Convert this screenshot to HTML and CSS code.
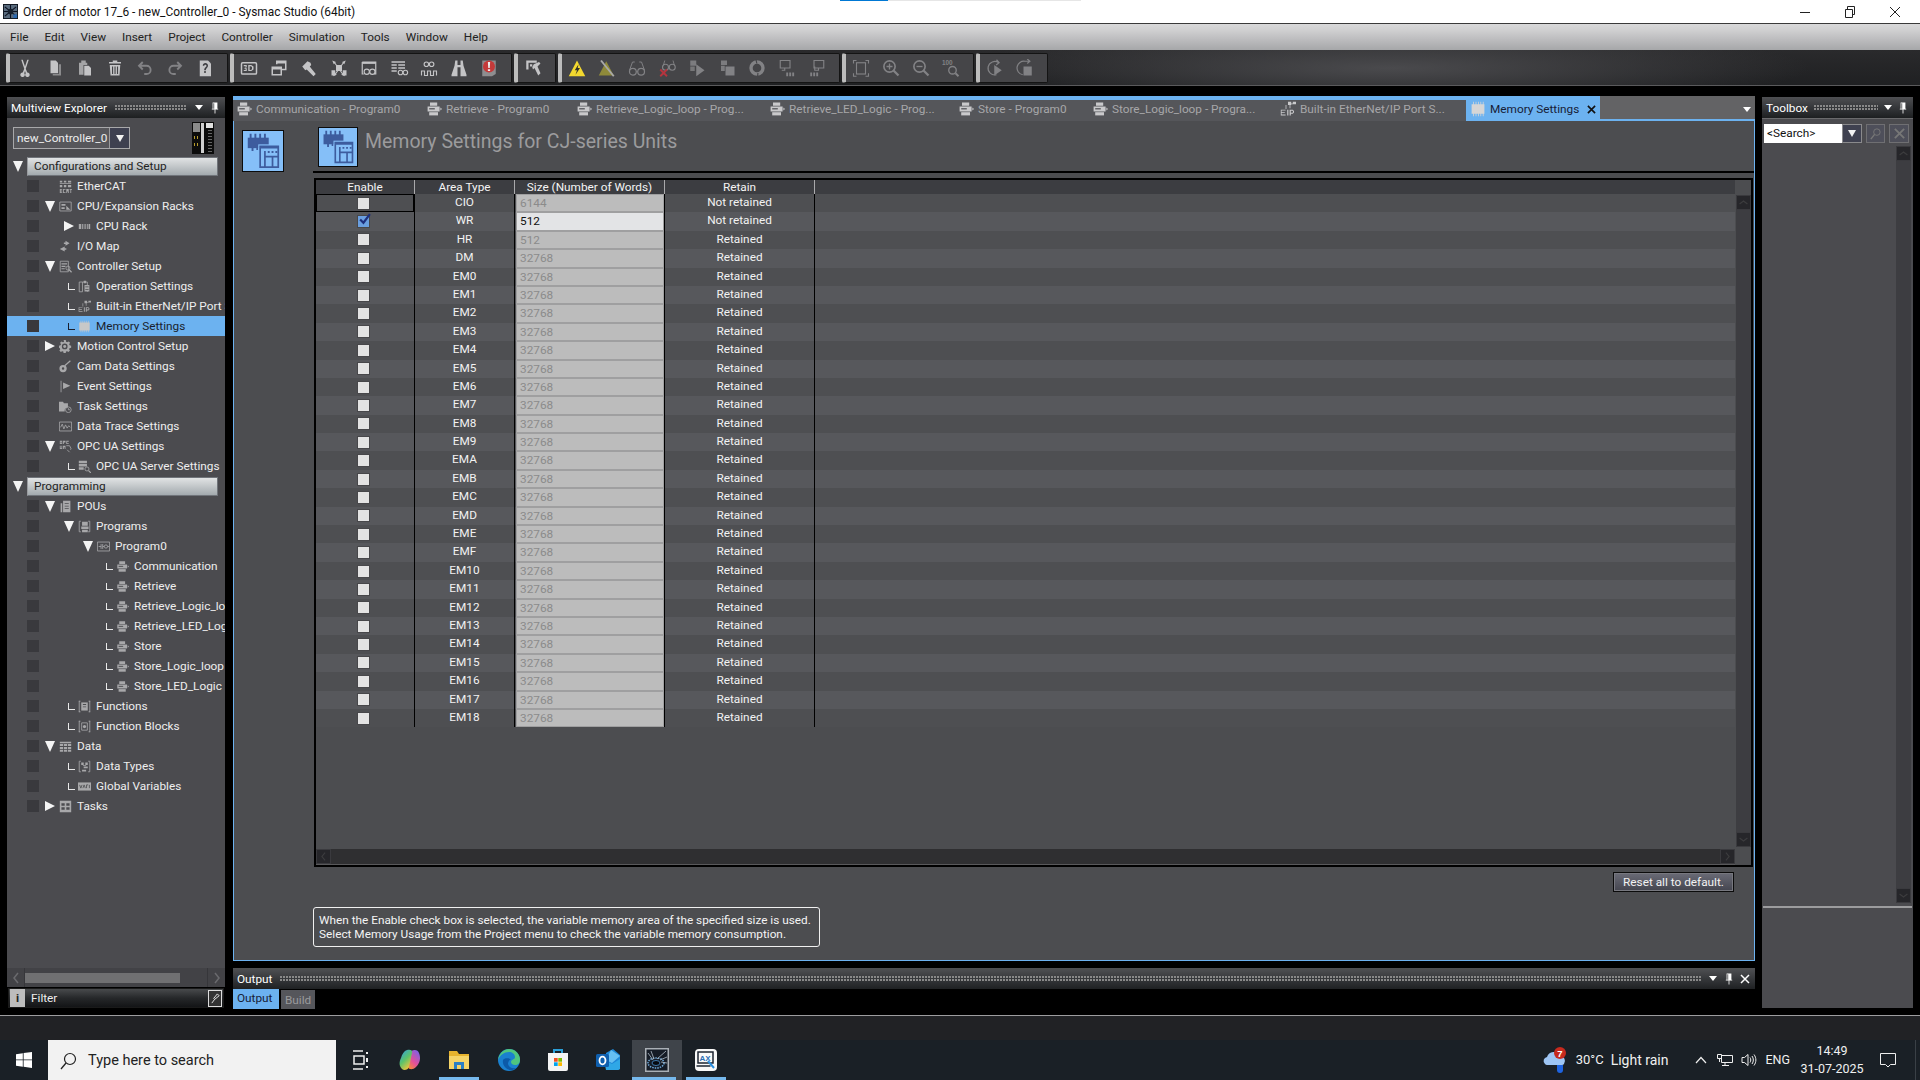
FILE: index.html
```html
<!DOCTYPE html>
<html lang="en">
<head>
<meta charset="utf-8">
<title>Order of motor 17_6 - new_Controller_0 - Sysmac Studio (64bit)</title>
<link rel="stylesheet" href="styles.css">
</head>
<body>
<svg class="defs" aria-hidden="true">
  <symbol id="cut" viewBox="0 0 24 24"><path d="M7 1h2l3 9 3-9h2l-4 12 2 5a3 3 0 1 1-2 1l-1-3-1 3a3 3 0 1 1-2-1l2-5z"/></symbol>
  <symbol id="copy" viewBox="0 0 24 24"><path d="M6 2h7l3 3v14H6z"/><path opacity=".55" d="M17 7h3v15H9v-2h8z"/></symbol>
  <symbol id="paste" viewBox="0 0 24 24"><path opacity=".75" d="M4 5h3V2h6v3h2v3h-5v13H4z"/><path d="M11 9h6l3 3v10h-9z"/></symbol>
  <symbol id="trash" viewBox="0 0 24 24"><path d="M9 2h6v2h5v2H4V4h5z"/><path d="M5 8h14l-1 14H6zM8 10v10h1.500V10zm3.300 0v10h1.500V10zm3.300 0v10h1.500V10z" fill-rule="evenodd"/></symbol>
  <symbol id="undo" viewBox="0 0 24 24"><path fill="none" stroke="currentColor" stroke-width="2.500" d="M9 4L4 9l5 5M4 9h10a5.500 5.500 0 0 1 0 11h-3"/></symbol>
  <symbol id="redo" viewBox="0 0 24 24"><path fill="none" stroke="currentColor" stroke-width="2.500" d="M15 4l5 5-5 5M20 9H10a5.500 5.500 0 0 0 0 11h3"/></symbol>
  <symbol id="help" viewBox="0 0 24 24"><path d="M5 2h11l4 4v17H5z"/><path fill="#3c3c40" d="M9 9c0-5 7-5 7 0 0 3-3 3-3 6h-2c0-4 3-4 3-6 0-2-3-2-3 0zM11 16h2v2.500h-2z"/></symbol>
  <symbol id="t3d" viewBox="0 0 24 24"><rect x="2" y="5" width="20" height="15" rx="1.500" fill="none" stroke="currentColor" stroke-width="2"/><path d="M5 8h4v2.500l-1 1 1 1V16H5v-1.500h2.500v-1.600H6v-1.300h1.500V9.500H5zM11 8h4l3 2v4l-3 2h-4zm1.800 1.500v5h1.700l1.500-1v-3l-1.500-1z"/></symbol>
  <symbol id="wins" viewBox="0 0 24 24"><path fill="none" stroke="currentColor" stroke-width="2" d="M3 11h12v10H3zM9 7V3h12v11h-6"/><path d="M3 11h12v3H3zM9 3h12v3H9z"/></symbol>
  <symbol id="hammer" viewBox="0 0 24 24"><path d="M3 10l7-7 4 2 1 3-2 2 8 10-3 3-9-9-2 1z"/></symbol>
  <symbol id="xchip" viewBox="0 0 24 24"><path d="M3 2l5 2-1 1 10 14 1-1 2 5-5-2 1-1L6 6 5 7zM21 2l-5 2 1 1L7 19l-1-1-2 5 5-2-1-1L18 6l1 1z"/><rect x="8" y="8" width="8" height="8"/><path d="M2 15h5v7H2zM17 15h5v7h-5z"/></symbol>
  <symbol id="winglass" viewBox="0 0 24 24"><path fill="none" stroke="currentColor" stroke-width="1.600" d="M3 4h18v16h-2M5 20H3V4"/><path d="M3 4h18v2.500H3z"/><circle cx="9" cy="17" r="3.500" fill="none" stroke="currentColor" stroke-width="1.500"/><circle cx="16.500" cy="17" r="3.500" fill="none" stroke="currentColor" stroke-width="1.500"/></symbol>
  <symbol id="tblglass" viewBox="0 0 24 24"><path d="M2 3h18v2H2zM2 7h7v2H2zM11 7h9v2h-9zM2 11h7v2H2zM11 11h9v2h-9zM2 15h7v2H2z"/><circle cx="14" cy="18" r="3" fill="none" stroke="currentColor" stroke-width="1.500"/><circle cx="20.500" cy="18" r="3" fill="none" stroke="currentColor" stroke-width="1.500"/></symbol>
  <symbol id="gpulse" viewBox="0 0 24 24"><circle cx="8.500" cy="7" r="3" fill="none" stroke="currentColor" stroke-width="1.500"/><circle cx="15.500" cy="7" r="3" fill="none" stroke="currentColor" stroke-width="1.500"/><path fill="none" stroke="currentColor" stroke-width="1.500" d="M2 22v-6h4v6h4v-6h4v6h4v-6h4v6"/></symbol>
  <symbol id="binoc" viewBox="0 0 24 24"><path d="M7 2h3v6h4V2h3l1 7 4 12v2h-8V11h-4v12H2v-2L6 9z"/></symbol>
  <symbol id="alert" viewBox="0 0 24 24"><path fill="#8e8e90" d="M3 2h18v18l-5 3H3z"/><circle cx="12" cy="10" r="8" fill="#c43a3a"/><path fill="#eee" d="M10.500 4h3l-.5 8h-2zM10.500 13.500h3v2.500h-3z"/></symbol>
  <symbol id="build" viewBox="0 0 24 24"><path d="M3 2h14v3H6v9H3z"/><path d="M8 7h3v3H8zM13 7l7-3 2 2-4 4 4 9-3 3-5-10-2 2-1-3z"/></symbol>
  <symbol id="warn" viewBox="0 0 24 24"><path fill="#f3d82f" d="M12 2l11 21H1z"/><path fill="#33332a" d="M14 7l-5 8h3l-2 6 6-9h-3z"/></symbol>
  <symbol id="warnoff" viewBox="0 0 24 24"><path fill="#8f8a3a" d="M11 3l10 19H1z"/><path stroke="#a9a9a9" stroke-width="2.500" d="M4 2l17 21"/></symbol>
  <symbol id="glass" viewBox="0 0 24 24"><circle cx="6.500" cy="17" r="4.500" fill="none" stroke="currentColor" stroke-width="1.600"/><circle cx="17.500" cy="17" r="4.500" fill="none" stroke="currentColor" stroke-width="1.600"/><path fill="none" stroke="currentColor" stroke-width="1.300" d="M2 15L6 4h3M22 15L18 4h-3M11 17h2"/></symbol>
  <symbol id="glassx" viewBox="0 0 24 24"><circle cx="10" cy="11" r="4" fill="none" stroke="currentColor" stroke-width="1.500"/><circle cx="19" cy="11" r="4" fill="none" stroke="currentColor" stroke-width="1.500"/><path fill="none" stroke="currentColor" stroke-width="1.200" d="M7 9l2-7M22 9l-2-7"/><path stroke="#b5343e" stroke-width="2.500" d="M3 14l9 9M12 14l-9 9"/></symbol>
  <symbol id="pplay" viewBox="0 0 24 24"><path d="M3 2h8v7H3z" opacity=".9"/><path d="M3 10h6v6H3z" opacity=".8"/><path d="M11 7l11 8-11 8z"/></symbol>
  <symbol id="pstop" viewBox="0 0 24 24"><path d="M4 2h8v6H4zM4 9h5v7H4z" opacity=".9"/><rect x="10" y="10" width="12" height="12"/></symbol>
  <symbol id="ring" viewBox="0 0 24 24"><circle cx="12" cy="12" r="8" fill="none" stroke="currentColor" stroke-width="4.500"/><path fill="#454548" d="M10 1h1.500l1 5H11zM12.500 18.500h1.500l-.5 5H12z"/></symbol>
  <symbol id="mona" viewBox="0 0 24 24"><path fill="none" stroke="currentColor" stroke-width="1.500" d="M3 2h13v10H3zM9 12v3H5"/><path d="M11 18h2.500v5H11zM15 18h2.500v5H15zM19 18h2.500v5H19z"/></symbol>
  <symbol id="monb" viewBox="0 0 24 24"><path fill="none" stroke="currentColor" stroke-width="1.500" d="M8 2h13v10H8zM14 12v3h-5V10"/><path d="M3 18h2.500v5H3zM7 18h2.500v5H7zM11 18h2.500v5H11z"/></symbol>
  <symbol id="frame" viewBox="0 0 24 24"><path fill="none" stroke="currentColor" stroke-width="1.500" d="M6 2H2v4M18 2h4v4M6 23H2v-4M18 23h4v-4"/><rect x="6" y="5" width="12" height="15" fill="none" stroke="currentColor" stroke-width="1.500"/></symbol>
  <symbol id="zin" viewBox="0 0 24 24"><circle cx="10" cy="10" r="7.500" fill="none" stroke="currentColor" stroke-width="2.200"/><path stroke="currentColor" stroke-width="3" d="M15 15l7 7"/><path stroke="currentColor" stroke-width="1.800" d="M6 10h8M10 6v8"/></symbol>
  <symbol id="zout" viewBox="0 0 24 24"><circle cx="10" cy="10" r="7.500" fill="none" stroke="currentColor" stroke-width="2.200"/><path stroke="currentColor" stroke-width="3" d="M15 15l7 7"/><path stroke="currentColor" stroke-width="1.800" d="M6 10h8"/></symbol>
  <symbol id="z100" viewBox="0 0 24 24"><text x="0" y="8" font-size="8.500" font-family="Liberation Sans" font-weight="700" fill="currentColor">100</text><circle cx="14" cy="15" r="5" fill="none" stroke="currentColor" stroke-width="1.800"/><path stroke="currentColor" stroke-width="2.500" d="M18 19l4 4"/></symbol>
  <symbol id="cplay" viewBox="0 0 24 24"><path fill="none" stroke="currentColor" stroke-width="1.600" d="M14 21a9 9 0 1 1 3-16M14 1l3.500 4-4 3"/><path d="M11 8l10 7-10 7z"/></symbol>
  <symbol id="cstop" viewBox="0 0 24 24"><path fill="none" stroke="currentColor" stroke-width="1.600" d="M9 21a9 9 0 0 1 3-18h6M15 0l3.500 3-3.500 3"/><rect x="10" y="10" width="11" height="12"/></symbol>

  <symbol id="prog" viewBox="0 0 20 20"><path d="M5 2h9v4H5zM2 7h15v6H2z"/><path d="M4 14h11v4H4z"/><path fill="#4c4d50" d="M4 9h7v1.500H4z"/><path d="M18 8l2 2-2 2z"/></symbol>
  <symbol id="mem" viewBox="0 0 20 20"><path d="M2 4h2V1h1v3h2V1h1v3h2V1h1v3h2V1h1v3h2V1h1v3h1v12h-1v3h-1v-3h-2v3h-1v-3h-2v3h-1v-3H8v3H7v-3H5v3H4v-3H2z"/></symbol>
  <symbol id="eip" viewBox="0 0 20 20"><path d="M10 1h4v4h-4zM16 1h4v3h-4zM14 3h2v1h-2zM12 5h1v4h-1z"/><path d="M8 5v5H7V5z"/><path d="M1 11h6v1H2v2h4v1H2v2h5v1H1zM9 11h1.500v7H9zM12 11h4l1.500 1.500v2L16 16h-2.500v2H12zm1.500 1.200v2.600h2l.7-.7v-1.200l-.7-.7z"/></symbol>
  <symbol id="i-ecat" viewBox="0 0 16 16"><path d="M1 1h3v2H1zM6 1h3v2H6zM11 1h4v2h-4zM1 4h14v1H1zM1 6h3v3H1zM6 6h3v3H6zM11 6h4v3h-4zM1 11h3v1H2v1h2v1H2v1h2v1H1zM5 11h3v1H6v3h2v1H5zM9 11h3v5h-1v-2h-1v2H9zM13 11h3v1h-1v4h-1v-4h-1z"/></symbol>
  <symbol id="i-rack" viewBox="0 0 16 16"><path fill="none" stroke="currentColor" d="M1 2.500h14v11H1z"/><path d="M3 5h5v2H3zM3 9h4v2H3zM9 7l5 5H9z"/></symbol>
  <symbol id="i-cpu" viewBox="0 0 16 16"><path d="M1 5h3v6H1zM5 5h1v6H5zM7 5h1v6H7zM9 5h1v6H9zM11 5h1v6h-1zM13 5h2v6h-2z"/></symbol>
  <symbol id="i-io" viewBox="0 0 16 16"><path d="M8 1l5 3-5 3V5H6V3h2zM7 8v2h2v2H7v2L1 11z"/></symbol>
  <symbol id="i-setup" viewBox="0 0 16 16"><path fill="none" stroke="currentColor" d="M1.500 1.500h10v13h-10z"/><path d="M3 4h7v1.500H3zM3 7h5v1.500H3zM3 10h4v1.500H3z"/><circle cx="11" cy="10" r="2.500" fill="none" stroke="currentColor"/><path stroke="currentColor" stroke-width="1.600" d="M12.500 12l3 3"/></symbol>
  <symbol id="i-op" viewBox="0 0 16 16"><path fill="none" stroke="currentColor" d="M1.500 2.500h4v12h-4zM5.500 2.500h6v12"/><path d="M7 1h3v3H7zM8 6h6v8H8z"/><path fill="#4c4d50" d="M9 8h4v1H9zM9 11h4v1H9z"/></symbol>
  <symbol id="i-gear" viewBox="0 0 16 16"><path fill-rule="evenodd" d="M6.500 0h3l.4 2.300 1.500.7L13.500 2l2 2-1.300 2 .7 1.500 2.100.5v3l-2.300.4-.6 1.400 1.200 2-2 2-2-1.200-1.500.6-.4 2.300h-3l-.4-2.300-1.500-.6-2 1.200-2-2 1.200-2-.6-1.400L0 10.900v-3l2.100-.4.700-1.500L1.500 4l2-2 2.100 1 1.400-.7zM8 5a4 4 0 1 0 0 8 4 4 0 0 0 0-8z" transform="scale(.88)"/><circle cx="7" cy="8" r="1.800"/></symbol>
  <symbol id="i-cam" viewBox="0 0 16 16"><path fill-rule="evenodd" d="M5 6a4.500 4.500 0 1 1 0 9 4.500 4.500 0 0 1 0-9zm0 3a1.500 1.500 0 1 0 0 3 1.500 1.500 0 0 0 0-3z"/><path stroke="currentColor" stroke-width="1.500" d="M7 7l7-6"/></symbol>
  <symbol id="i-flag" viewBox="0 0 16 16"><path d="M2 1h1v14H2zM5 3l9 4-9 4z"/></symbol>
  <symbol id="i-task" viewBox="0 0 16 16"><path d="M0 2h5l1 2h5v5a4.500 4.500 0 0 0-4 5H0z"/><circle cx="11.500" cy="12" r="3.500" fill="none" stroke="currentColor"/><path fill="none" stroke="currentColor" d="M11.500 10v2h2"/></symbol>
  <symbol id="i-trace" viewBox="0 0 16 16"><path fill="none" stroke="currentColor" d="M.5 2.500h15v11H.5z"/><path fill="none" stroke="currentColor" d="M2 9l2-4 2 6 2-5 2 4 2-3 2 2"/></symbol>
  <symbol id="i-opc" viewBox="0 0 16 16"><path d="M1 1h3v4H1zm1 1v2h1V2zM5 1h3v2H6v2H5zM9 1h3v1h-2v2h2v1H9zM1 7h1v3h1V7h1v4H1zM5 7h3v4H7V9H6v2H5z" fill-rule="evenodd"/><path fill="none" stroke="currentColor" d="M9 7h4l2 4-1 1M13 15l-3-3"/></symbol>
  <symbol id="i-server" viewBox="0 0 16 16"><path d="M1 1h10v3H1zM1 5h10v3H1zM1 9h6v3H1z"/><circle cx="11" cy="11" r="2.500" fill="none" stroke="currentColor"/><path stroke="currentColor" stroke-width="1.500" d="M13 13l3 3"/></symbol>
  <symbol id="i-pou" viewBox="0 0 16 16"><path d="M2 4h2v11H2zM5 1h9v14H5z"/><path fill="#4c4d50" d="M7 4h5v1H7zM7 7h5v1H7zM7 10h5v1H7z"/></symbol>
  <symbol id="i-progs" viewBox="0 0 16 16"><path fill="none" stroke="currentColor" d="M3.500 1.500h-2v13h2M12.500 1.500h2v13h-2"/><path d="M5 2h7v5H5zM4 8h9v3H4zM5 12h7v3H5z"/></symbol>
  <symbol id="i-prog0" viewBox="0 0 16 16"><path fill="none" stroke="currentColor" d="M.5 2.500h15v11H.5z"/><path fill="none" stroke="currentColor" d="M2 8h3M5 5v6M7 5v6M7 8h2M13 8h2"/><circle cx="11" cy="8" r="2" fill="none" stroke="currentColor"/></symbol>
  <symbol id="i-func" viewBox="0 0 16 16"><path fill="none" stroke="currentColor" d="M1 1.500h2M1 14.500h2M15 1.500h-2M15 14.500h-2M1.500 1v14M14.500 1v14"/><path d="M4 3h8v10H4z"/><path fill="#4c4d50" d="M6 5h4v1H6zM6 8h4v1H6z"/></symbol>
  <symbol id="i-fb" viewBox="0 0 16 16"><path fill="none" stroke="currentColor" d="M1 1.500h2M1 14.500h2M15 1.500h-2M15 14.500h-2M1.500 1v14M14.500 1v14M4.500 3.500h7v9h-7z"/><circle cx="8" cy="8" r="2"/></symbol>
  <symbol id="i-data" viewBox="0 0 16 16"><path d="M1 2h14v2H1zM1 5h4v2.500H1zM6 5h4v2.500H6zM11 5h4v2.500h-4zM1 8.500h4V11H1zM6 8.500h4V11H6zM11 8.500h4V11h-4zM1 12h4v2.500H1zM6 12h4v2.500H6zM11 12h4v2.500h-4z"/></symbol>
  <symbol id="i-types" viewBox="0 0 16 16"><path fill="none" stroke="currentColor" d="M3.500 1.500h-2v13h2M12.500 1.500h2v13h-2"/><path d="M4 3h3v3H4zM9 3h3v3H9zM6 6h4v1H6zM7 8h5v2H7zM5 12h5v2H5z"/></symbol>
  <symbol id="i-var" viewBox="0 0 16 16"><path d="M0 3h16v10H0z"/><path stroke="#4c4d50" fill="none" d="M2 6l1.500 4L5 6M6 10l1.500-4L9 10M10.500 10V6h2M14 6v4"/></symbol>
  <symbol id="i-tasks" viewBox="0 0 16 16"><path fill-rule="evenodd" d="M1 1h14v14H1zm2 3v3h4V4zm6 0v3h4V4zM3 9v3h4V9zm6 0v3h4V9z"/></symbol>
  <symbol id="chipboard" viewBox="0 0 42 42"><path fill="#3d5c9e" d="M5 7h22v11H5z"/><path fill="#3d5c9e" d="M7 3h2v5H7zM12 3h2v5h-2zM17 3h2v5h-2zM22 3h2v5h-2zM9 17h2v4H9zM14 17h2v3h-2z"/><path fill="#85bff8" d="M16 14h22v25H16z"/><path fill="none" stroke="#3d5c9e" stroke-width="1.800" d="M18 16h19v22H18zM23 21v17M23 27h14M31 27v11"/><path fill="#3d5c9e" d="M18 16h19v2.500H18zM26 21h2v2h-2zM30 21h2v2h-2zM34 21h2v2h-2z"/></symbol>
</svg>

<header class="titlebar">
  <svg class="appicon" viewBox="0 0 16 16"><rect width="16" height="16" fill="#10161f"/><rect x="1" y="1" width="14" height="14" fill="#5a6c7e"/><path stroke="#0b1120" stroke-width="1.200" d="M2 3l12 10M14 3L2 13M8 1v14M1 8h14"/><circle cx="8" cy="8" r="3" fill="#16202e"/><rect x="11" y="11" width="4" height="4" fill="#2b69b0"/></svg>
  <span class="title-text">Order of motor 17_6 - new_Controller_0 - Sysmac Studio (64bit)</span>
  <span class="loadbar"></span>
  <div class="winbtns">
    <svg viewBox="0 0 12 12"><path stroke="#222" d="M1 6.500h10"/></svg>
    <svg viewBox="0 0 12 12"><path fill="none" stroke="#222" d="M1.500 3.500h7v8h-7zM3.500 3.500v-3h7v8h-2"/></svg>
    <svg viewBox="0 0 12 12"><path stroke="#222" d="M1 1l10 10M11 1L1 11"/></svg>
  </div>
</header>

<nav class="menubar">
  <span>File</span><span>Edit</span><span>View</span><span>Insert</span><span>Project</span><span>Controller</span><span>Simulation</span><span>Tools</span><span>Window</span><span>Help</span>
</nav>

<div class="toolbar">
  <div class="tgroup">
    <svg class="tb"><use href="#cut"/></svg><svg class="tb"><use href="#copy"/></svg><svg class="tb"><use href="#paste"/></svg><svg class="tb"><use href="#trash"/></svg><svg class="tb dim"><use href="#undo"/></svg><svg class="tb dim"><use href="#redo"/></svg><svg class="tb"><use href="#help"/></svg>
  </div>
  <div class="tgroup">
    <svg class="tb"><use href="#t3d"/></svg><svg class="tb"><use href="#wins"/></svg><svg class="tb"><use href="#hammer"/></svg><svg class="tb"><use href="#xchip"/></svg><svg class="tb"><use href="#winglass"/></svg><svg class="tb"><use href="#tblglass"/></svg><svg class="tb"><use href="#gpulse"/></svg><svg class="tb"><use href="#binoc"/></svg><svg class="tb"><use href="#alert"/></svg>
  </div>
  <div class="tgroup">
    <svg class="tb"><use href="#build"/></svg>
  </div>
  <div class="tgroup">
    <svg class="tb"><use href="#warn"/></svg><svg class="tb"><use href="#warnoff"/></svg><svg class="tb dim"><use href="#glass"/></svg><svg class="tb dim"><use href="#glassx"/></svg><svg class="tb dim"><use href="#pplay"/></svg><svg class="tb dim"><use href="#pstop"/></svg><svg class="tb dim"><use href="#ring"/></svg><svg class="tb dim"><use href="#mona"/></svg><svg class="tb dim"><use href="#monb"/></svg>
  </div>
  <div class="tgroup">
    <svg class="tb dim"><use href="#frame"/></svg><svg class="tb dim"><use href="#zin"/></svg><svg class="tb dim"><use href="#zout"/></svg><svg class="tb dim"><use href="#z100"/></svg>
  </div>
  <div class="tgroup">
    <svg class="tb dim"><use href="#cplay"/></svg><svg class="tb dim"><use href="#cstop"/></svg>
  </div>
</div>

<main class="workspace">
  <aside class="explorer">
    <div class="phead">
      <span class="ptitle">Multiview Explorer</span><span class="grip"></span><i class="tri-sm"></i>
      <svg class="pin" viewBox="0 0 10 14"><path fill="#fff" d="M2 0h6v8h1v1H5.500v5h-1V9H1V8h1zm1 1v7h1V1z" fill-rule="evenodd"/></svg>
    </div>
    <div class="ctrlrow">
      <div class="combo"><span class="combo-text">new_Controller_0</span><span class="combo-btn"><i class="tri-down-sm"></i></span></div>
      <svg class="plc" viewBox="0 0 22 32"><rect width="22" height="32" fill="#0c0c0c"/><rect x="1" y="1" width="7" height="9" fill="#8b8b8b"/><rect x="9" y="1" width="3" height="30" fill="#cfcfcf"/><rect x="14" y="1" width="7" height="5" fill="#e0e0e0"/><rect x="2" y="14" width="1" height="3" fill="#b89c2c"/><rect x="5" y="14" width="1" height="3" fill="#b89c2c"/><rect x="2" y="21" width="1" height="3" fill="#b89c2c"/><rect x="5" y="21" width="1" height="3" fill="#b89c2c"/><path stroke="#c0c0c0" stroke-dasharray="1 2" d="M17 8v22M19 8v22"/></svg>
    </div>
    <div class="tree">
      <div class="band-row"><i class="tri-down"></i><span class="band">Configurations and Setup</span></div>
      <div class="row"><i class="chk"></i><span class="gut g1"></span><span class="tw"></span><svg class="ic"><use href="#i-ecat"/></svg><span class="lbl">EtherCAT</span></div>
      <div class="row"><i class="chk"></i><span class="gut g1"></span><span class="tw"><i class="tri-down"></i></span><svg class="ic"><use href="#i-rack"/></svg><span class="lbl">CPU/Expansion Racks</span></div>
      <div class="row"><i class="chk"></i><span class="gut g2"></span><span class="tw"><i class="tri-right"></i></span><svg class="ic"><use href="#i-cpu"/></svg><span class="lbl">CPU Rack</span></div>
      <div class="row"><i class="chk"></i><span class="gut g1"></span><span class="tw"></span><svg class="ic"><use href="#i-io"/></svg><span class="lbl">I/O Map</span></div>
      <div class="row"><i class="chk"></i><span class="gut g1"></span><span class="tw"><i class="tri-down"></i></span><svg class="ic"><use href="#i-setup"/></svg><span class="lbl">Controller Setup</span></div>
      <div class="row"><i class="chk"></i><span class="gut g2"></span><span class="tw"><i class="elbow"></i></span><svg class="ic"><use href="#i-op"/></svg><span class="lbl">Operation Settings</span></div>
      <div class="row"><i class="chk"></i><span class="gut g2"></span><span class="tw"><i class="elbow"></i></span><svg class="ic"><use href="#eip"/></svg><span class="lbl">Built-in EtherNet/IP Port Settings</span></div>
      <div class="row sel"><i class="chk"></i><span class="gut g2"></span><span class="tw"><i class="elbow"></i></span><svg class="ic"><use href="#mem"/></svg><span class="lbl">Memory Settings</span></div>
      <div class="row"><i class="chk"></i><span class="gut g1"></span><span class="tw"><i class="tri-right"></i></span><svg class="ic"><use href="#i-gear"/></svg><span class="lbl">Motion Control Setup</span></div>
      <div class="row"><i class="chk"></i><span class="gut g1"></span><span class="tw"></span><svg class="ic"><use href="#i-cam"/></svg><span class="lbl">Cam Data Settings</span></div>
      <div class="row"><i class="chk"></i><span class="gut g1"></span><span class="tw"></span><svg class="ic"><use href="#i-flag"/></svg><span class="lbl">Event Settings</span></div>
      <div class="row"><i class="chk"></i><span class="gut g1"></span><span class="tw"></span><svg class="ic"><use href="#i-task"/></svg><span class="lbl">Task Settings</span></div>
      <div class="row"><i class="chk"></i><span class="gut g1"></span><span class="tw"></span><svg class="ic"><use href="#i-trace"/></svg><span class="lbl">Data Trace Settings</span></div>
      <div class="row"><i class="chk"></i><span class="gut g1"></span><span class="tw"><i class="tri-down"></i></span><svg class="ic"><use href="#i-opc"/></svg><span class="lbl">OPC UA Settings</span></div>
      <div class="row"><i class="chk"></i><span class="gut g2"></span><span class="tw"><i class="elbow"></i></span><svg class="ic"><use href="#i-server"/></svg><span class="lbl">OPC UA Server Settings</span></div>
      <div class="band-row"><i class="tri-down"></i><span class="band">Programming</span></div>
      <div class="row"><i class="chk"></i><span class="gut g1"></span><span class="tw"><i class="tri-down"></i></span><svg class="ic"><use href="#i-pou"/></svg><span class="lbl">POUs</span></div>
      <div class="row"><i class="chk"></i><span class="gut g2"></span><span class="tw"><i class="tri-down"></i></span><svg class="ic"><use href="#i-progs"/></svg><span class="lbl">Programs</span></div>
      <div class="row"><i class="chk"></i><span class="gut g3"></span><span class="tw"><i class="tri-down"></i></span><svg class="ic"><use href="#i-prog0"/></svg><span class="lbl">Program0</span></div>
      <div class="row"><i class="chk"></i><span class="gut g4"></span><span class="tw"><i class="elbow"></i></span><svg class="ic"><use href="#prog"/></svg><span class="lbl">Communication</span></div>
      <div class="row"><i class="chk"></i><span class="gut g4"></span><span class="tw"><i class="elbow"></i></span><svg class="ic"><use href="#prog"/></svg><span class="lbl">Retrieve</span></div>
      <div class="row"><i class="chk"></i><span class="gut g4"></span><span class="tw"><i class="elbow"></i></span><svg class="ic"><use href="#prog"/></svg><span class="lbl">Retrieve_Logic_loop</span></div>
      <div class="row"><i class="chk"></i><span class="gut g4"></span><span class="tw"><i class="elbow"></i></span><svg class="ic"><use href="#prog"/></svg><span class="lbl">Retrieve_LED_Logic</span></div>
      <div class="row"><i class="chk"></i><span class="gut g4"></span><span class="tw"><i class="elbow"></i></span><svg class="ic"><use href="#prog"/></svg><span class="lbl">Store</span></div>
      <div class="row"><i class="chk"></i><span class="gut g4"></span><span class="tw"><i class="elbow"></i></span><svg class="ic"><use href="#prog"/></svg><span class="lbl">Store_Logic_loop</span></div>
      <div class="row"><i class="chk"></i><span class="gut g4"></span><span class="tw"><i class="elbow"></i></span><svg class="ic"><use href="#prog"/></svg><span class="lbl">Store_LED_Logic</span></div>
      <div class="row"><i class="chk"></i><span class="gut g2"></span><span class="tw"><i class="elbow"></i></span><svg class="ic"><use href="#i-func"/></svg><span class="lbl">Functions</span></div>
      <div class="row"><i class="chk"></i><span class="gut g2"></span><span class="tw"><i class="elbow"></i></span><svg class="ic"><use href="#i-fb"/></svg><span class="lbl">Function Blocks</span></div>
      <div class="row"><i class="chk"></i><span class="gut g1"></span><span class="tw"><i class="tri-down"></i></span><svg class="ic"><use href="#i-data"/></svg><span class="lbl">Data</span></div>
      <div class="row"><i class="chk"></i><span class="gut g2"></span><span class="tw"><i class="elbow"></i></span><svg class="ic"><use href="#i-types"/></svg><span class="lbl">Data Types</span></div>
      <div class="row"><i class="chk"></i><span class="gut g2"></span><span class="tw"><i class="elbow"></i></span><svg class="ic"><use href="#i-var"/></svg><span class="lbl">Global Variables</span></div>
      <div class="row"><i class="chk"></i><span class="gut g1"></span><span class="tw"><i class="tri-right"></i></span><svg class="ic"><use href="#i-tasks"/></svg><span class="lbl">Tasks</span></div>
    </div>
    <div class="side-scroll">
      <span class="sb-btn"><svg viewBox="0 0 8 12"><path fill="none" stroke="#6a6a6e" stroke-width="1.500" d="M6 1L2 6l4 5"/></svg></span>
      <span class="sb-track"><span class="sb-thumb"></span></span>
      <span class="sb-btn"><svg viewBox="0 0 8 12"><path fill="none" stroke="#6a6a6e" stroke-width="1.500" d="M2 1l4 5-4 5"/></svg></span>
    </div>
    <div class="filter">
      <span class="info">i</span><span class="filter-text">Filter</span>
      <span class="filter-pin"><svg viewBox="0 0 12 14"><path fill="none" stroke="#eee" d="M4 7l4-5 2 2-5 4zM5 8l-3 4"/></svg></span>
    </div>
  </aside>

  <section class="center">
    <div class="doc">
      <div class="tabstrip">
        <div class="tabs">
          <div class="tab t1"><svg class="tabic"><use href="#prog"/></svg><span>Communication - Program0</span></div>
          <div class="tab t2"><svg class="tabic"><use href="#prog"/></svg><span>Retrieve - Program0</span></div>
          <div class="tab t3"><svg class="tabic"><use href="#prog"/></svg><span>Retrieve_Logic_loop - Prog...</span></div>
          <div class="tab t4"><svg class="tabic"><use href="#prog"/></svg><span>Retrieve_LED_Logic - Prog...</span></div>
          <div class="tab t5"><svg class="tabic"><use href="#prog"/></svg><span>Store - Program0</span></div>
          <div class="tab t6"><svg class="tabic"><use href="#prog"/></svg><span>Store_Logic_loop - Progra...</span></div>
          <div class="tab t7"><svg class="tabic"><use href="#eip"/></svg><span>Built-in EtherNet/IP Port S...</span></div>
          <div class="tab active"><svg class="tabic"><use href="#mem"/></svg><span>Memory Settings</span><svg class="tabx" viewBox="0 0 10 10"><path stroke="#111" stroke-width="1.800" d="M1 1l8 8M9 1L1 9"/></svg></div>
        </div>
        <div class="tabfill"><i class="tri-sm"></i></div>
      </div>
      <div class="docbody">
        <div class="bigicon side-ic"><svg><use href="#chipboard"/></svg></div>
        <div class="panel">
          <div class="panel-head">
            <div class="bigicon head-ic"><svg><use href="#chipboard"/></svg></div>
            <h1 class="panel-title">Memory Settings for CJ-series Units</h1>
          </div>
          <div class="tblwrap">
            <div class="tblmain">
              <div class="thead">
                <div class="th">Enable</div><div class="th">Area Type</div><div class="th">Size (Number of Words)</div><div class="th">Retain</div><div class="thend"></div>
              </div>
              <div class="tr"><div class="td en focus"><i class="cb"></i></div><div class="td">CIO</div><div class="td"><span class="inp">6144</span></div><div class="td">Not retained</div></div>
              <div class="tr"><div class="td en"><i class="cb on"><svg viewBox="0 0 12 12"><path fill="none" stroke="#1d2f7c" stroke-width="2" d="M2 6l3 3 6-8"/></svg></i></div><div class="td">WR</div><div class="td"><span class="inp live">512</span></div><div class="td">Not retained</div></div>
              <div class="tr"><div class="td en"><i class="cb"></i></div><div class="td">HR</div><div class="td"><span class="inp">512</span></div><div class="td">Retained</div></div>
              <div class="tr"><div class="td en"><i class="cb"></i></div><div class="td">DM</div><div class="td"><span class="inp">32768</span></div><div class="td">Retained</div></div>
              <div class="tr"><div class="td en"><i class="cb"></i></div><div class="td">EM0</div><div class="td"><span class="inp">32768</span></div><div class="td">Retained</div></div>
              <div class="tr"><div class="td en"><i class="cb"></i></div><div class="td">EM1</div><div class="td"><span class="inp">32768</span></div><div class="td">Retained</div></div>
              <div class="tr"><div class="td en"><i class="cb"></i></div><div class="td">EM2</div><div class="td"><span class="inp">32768</span></div><div class="td">Retained</div></div>
              <div class="tr"><div class="td en"><i class="cb"></i></div><div class="td">EM3</div><div class="td"><span class="inp">32768</span></div><div class="td">Retained</div></div>
              <div class="tr"><div class="td en"><i class="cb"></i></div><div class="td">EM4</div><div class="td"><span class="inp">32768</span></div><div class="td">Retained</div></div>
              <div class="tr"><div class="td en"><i class="cb"></i></div><div class="td">EM5</div><div class="td"><span class="inp">32768</span></div><div class="td">Retained</div></div>
              <div class="tr"><div class="td en"><i class="cb"></i></div><div class="td">EM6</div><div class="td"><span class="inp">32768</span></div><div class="td">Retained</div></div>
              <div class="tr"><div class="td en"><i class="cb"></i></div><div class="td">EM7</div><div class="td"><span class="inp">32768</span></div><div class="td">Retained</div></div>
              <div class="tr"><div class="td en"><i class="cb"></i></div><div class="td">EM8</div><div class="td"><span class="inp">32768</span></div><div class="td">Retained</div></div>
              <div class="tr"><div class="td en"><i class="cb"></i></div><div class="td">EM9</div><div class="td"><span class="inp">32768</span></div><div class="td">Retained</div></div>
              <div class="tr"><div class="td en"><i class="cb"></i></div><div class="td">EMA</div><div class="td"><span class="inp">32768</span></div><div class="td">Retained</div></div>
              <div class="tr"><div class="td en"><i class="cb"></i></div><div class="td">EMB</div><div class="td"><span class="inp">32768</span></div><div class="td">Retained</div></div>
              <div class="tr"><div class="td en"><i class="cb"></i></div><div class="td">EMC</div><div class="td"><span class="inp">32768</span></div><div class="td">Retained</div></div>
              <div class="tr"><div class="td en"><i class="cb"></i></div><div class="td">EMD</div><div class="td"><span class="inp">32768</span></div><div class="td">Retained</div></div>
              <div class="tr"><div class="td en"><i class="cb"></i></div><div class="td">EME</div><div class="td"><span class="inp">32768</span></div><div class="td">Retained</div></div>
              <div class="tr"><div class="td en"><i class="cb"></i></div><div class="td">EMF</div><div class="td"><span class="inp">32768</span></div><div class="td">Retained</div></div>
              <div class="tr"><div class="td en"><i class="cb"></i></div><div class="td">EM10</div><div class="td"><span class="inp">32768</span></div><div class="td">Retained</div></div>
              <div class="tr"><div class="td en"><i class="cb"></i></div><div class="td">EM11</div><div class="td"><span class="inp">32768</span></div><div class="td">Retained</div></div>
              <div class="tr"><div class="td en"><i class="cb"></i></div><div class="td">EM12</div><div class="td"><span class="inp">32768</span></div><div class="td">Retained</div></div>
              <div class="tr"><div class="td en"><i class="cb"></i></div><div class="td">EM13</div><div class="td"><span class="inp">32768</span></div><div class="td">Retained</div></div>
              <div class="tr"><div class="td en"><i class="cb"></i></div><div class="td">EM14</div><div class="td"><span class="inp">32768</span></div><div class="td">Retained</div></div>
              <div class="tr"><div class="td en"><i class="cb"></i></div><div class="td">EM15</div><div class="td"><span class="inp">32768</span></div><div class="td">Retained</div></div>
              <div class="tr"><div class="td en"><i class="cb"></i></div><div class="td">EM16</div><div class="td"><span class="inp">32768</span></div><div class="td">Retained</div></div>
              <div class="tr"><div class="td en"><i class="cb"></i></div><div class="td">EM17</div><div class="td"><span class="inp">32768</span></div><div class="td">Retained</div></div>
              <div class="tr"><div class="td en"><i class="cb"></i></div><div class="td">EM18</div><div class="td"><span class="inp">32768</span></div><div class="td">Retained</div></div>
              <div class="tblspace"></div>
              <div class="hscroll">
                <span class="scbtn"><svg viewBox="0 0 12 14"><path fill="none" stroke="#3c3c3e" stroke-width="1.500" d="M8 2L4 7l4 5"/></svg></span>
                <span class="sctrack"></span>
                <span class="scbtn"><svg viewBox="0 0 12 14"><path fill="none" stroke="#3c3c3e" stroke-width="1.500" d="M4 2l4 5-4 5"/></svg></span>
              </div>
            </div>
            <div class="vscroll">
              <span class="scbtn"><svg viewBox="0 0 14 12"><path fill="none" stroke="#3c3c3e" stroke-width="1.500" d="M2 8l5-4 5 4"/></svg></span>
              <span class="vtrack"></span>
              <span class="scbtn"><svg viewBox="0 0 14 12"><path fill="none" stroke="#3c3c3e" stroke-width="1.500" d="M2 4l5 4 5-4"/></svg></span>
            </div>
          </div>
          <button class="reset" type="button">Reset all to default.</button>
          <div class="note">When the Enable check box is selected, the variable memory area of the specified size is used.<br>Select Memory Usage from the Project menu to check the variable memory consumption.</div>
        </div>
      </div>
    </div>
    <div class="output">
      <div class="ohead">
        <span class="ptitle">Output</span><span class="grip"></span><i class="tri-sm"></i>
        <svg class="pin" viewBox="0 0 10 14"><path fill="#fff" fill-rule="evenodd" d="M2 0h6v8h1v1H5.500v5h-1V9H1V8h1zm1 1v7h1V1z"/></svg>
        <svg class="ox" viewBox="0 0 10 10"><path stroke="#fff" stroke-width="1.500" d="M1 1l8 8M9 1L1 9"/></svg>
      </div>
      <div class="otabs"><span class="otab on">Output</span><span class="otab">Build</span></div>
    </div>
  </section>

  <aside class="toolbox">
    <div class="phead tb-head">
      <span class="ptitle">Toolbox</span><span class="grip"></span><i class="tri-sm"></i>
      <svg class="pin" viewBox="0 0 10 14"><path fill="#fff" fill-rule="evenodd" d="M2 0h6v8h1v1H5.500v5h-1V9H1V8h1zm1 1v7h1V1z"/></svg>
    </div>
    <div class="searchrow">
      <span class="searchbox">&lt;Search&gt;</span>
      <span class="searchdrop"><i class="tri-down-sm"></i></span>
      <span class="sbtn"><svg viewBox="0 0 14 14"><circle cx="8.500" cy="5.500" r="3.500" fill="none" stroke="#777"/><path stroke="#777" stroke-width="1.500" d="M6 8l-4 5"/></svg></span>
      <span class="sbtn"><svg viewBox="0 0 14 14"><path stroke="#777" stroke-width="2" d="M2 2l10 10M12 2L2 12"/></svg></span>
    </div>
    <div class="tblist">
      <div class="vscroll2">
        <span class="scbtn"><svg viewBox="0 0 14 12"><path fill="none" stroke="#3c3c3e" stroke-width="1.500" d="M2 8l5-4 5 4"/></svg></span>
        <span class="vtrack"></span>
        <span class="scbtn"><svg viewBox="0 0 14 12"><path fill="none" stroke="#3c3c3e" stroke-width="1.500" d="M2 4l5 4 5-4"/></svg></span>
      </div>
    </div>
    <div class="tbline"></div>
  </aside>
</main>

<div class="appfoot"></div>

<footer class="taskbar">
  <div class="start"><svg viewBox="0 0 16 16"><path fill="#fff" d="M0 2.200l6.800-1v6.300H0zM7.600 1.100L16 0v7.500H7.600zM0 8.300h6.800v6.500L0 13.800zM7.600 8.300H16V16l-8.400-1.200z"/></svg></div>
  <div class="search"><svg viewBox="0 0 18 18"><circle cx="11" cy="7" r="5.500" fill="none" stroke="#222" stroke-width="1.200"/><path stroke="#222" stroke-width="1.300" d="M7 11l-5 6"/></svg><span>Type here to search</span></div>
  <div class="tk"><svg class="tkv" viewBox="0 0 17 22"><path fill="none" stroke="#eee" stroke-width="1.500" d="M1 2h10M1 20h10M2 7h10v8H2z"/><path fill="#eee" d="M14 3h2v2h-2zM14 9h2v4h-2zM14 17h2v2h-2z"/></svg></div>
  <div class="tk"><svg viewBox="0 0 24 24"><defs><linearGradient id="cpa" x1="0" y1="0" x2=".6" y2="1"><stop offset="0" stop-color="#2d9bf0"/><stop offset=".55" stop-color="#5cc36a"/><stop offset="1" stop-color="#f2c53c"/></linearGradient><linearGradient id="cpb" x1=".8" y1="0" x2=".2" y2="1"><stop offset="0" stop-color="#7a62e8"/><stop offset=".6" stop-color="#e24f9a"/><stop offset="1" stop-color="#f48a3c"/></linearGradient></defs><path fill="url(#cpb)" d="M13 3c4-2 7-1 8 2 2 5 1 10-3 14-3 3-7 3-8 0l3-16z"/><path fill="url(#cpa)" d="M9 2c3-1 6 0 5 3l-3 14c-1 3-5 4-7 2-3-3-3-7-1-11 1-4 3-7 6-8z"/></svg></div>
  <div class="tk run"><svg viewBox="0 0 24 24"><path fill="#e6b32e" d="M2 3h8l2 3h10v15H2z"/><path fill="#f5d468" d="M2 8h20v13H2z"/><path fill="#2b7fc4" d="M7 14h10v7h-3v-4h-4v4H7z"/></svg></div>
  <div class="tk"><svg viewBox="0 0 24 24"><circle cx="12" cy="12" r="11" fill="#1a80cf"/><path fill="#4fc57f" d="M12 1a11 11 0 0 1 11 11c0 3-2 5-5 5-2 0-4-1-4-3 0-3 4-2 4-5 0-3-3-5-6-5-5 0-9 3-11 8C2 6 6 1 12 1z"/><path fill="#0c5aa8" d="M6 12c-1 5 3 10 8 10 2 0 3.500-.5 5-2-3 1-7 0-8-4 0-2 1-4 3-5-3-1-7-1-8 1z"/></svg></div>
  <div class="tk"><svg viewBox="0 0 24 24"><path fill="none" stroke="#2a9fd8" stroke-width="2" d="M8 6V2h8v4"/><path fill="#f4f4f4" d="M2 5h20v16a2 2 0 0 1-2 2H4a2 2 0 0 1-2-2z"/><path fill="#f25022" d="M8 10h3.700v3.700H8z"/><path fill="#7fba00" d="M12.300 10H16v3.700h-3.700z"/><path fill="#00a4ef" d="M8 14.300h3.700V18H8z"/><path fill="#ffb900" d="M12.300 14.300H16V18h-3.700z"/></svg></div>
  <div class="tk"><svg viewBox="0 0 24 24"><path fill="#1e88d8" d="M10 5l7-4 7 6v14l-2 1H10z"/><path fill="#66bff2" d="M15 2l9 6-8 7-6-3z"/><path fill="#2fa7e6" d="M8 12l8 4 8-5v10l-2 1H10z"/><rect x="0" y="6" width="13" height="13" rx="1.500" fill="#0f5fae"/><ellipse cx="6.500" cy="12.500" rx="3" ry="3.800" fill="none" stroke="#fff" stroke-width="1.800"/></svg></div>
  <div class="tk act"><svg viewBox="0 0 24 24"><rect width="24" height="24" fill="#aab0b6"/><rect x="1.500" y="1.500" width="21" height="21" fill="#151c26"/><ellipse cx="11" cy="15" rx="8" ry="5" fill="none" stroke="#6fa8d8" stroke-width="1.500" stroke-dasharray="1.500 1"/><ellipse cx="11" cy="15" rx="4" ry="2.500" fill="#06090f" stroke="#3f78aa"/><path stroke="#b0bcc8" stroke-width=".8" d="M12 11L21 3M15 12l7-3M9 11L6 3M16 14l6 1M3 5l5 7"/></svg></div>
  <div class="tk run2"><svg viewBox="0 0 24 24"><rect x="1" y="1" width="22" height="22" rx="4" fill="#f9f9f9"/><path fill="none" stroke="#1c2430" stroke-width="1.500" d="M4 4h15v11H4zM2.500 18h14"/><text x="5.500" y="12.500" font-size="8" font-family="Liberation Sans" font-weight="700" fill="#2b6fb5">AX</text><path stroke="#2a8fe0" stroke-width="2" d="M14 13l6 7"/></svg></div>
  <div class="tray">
    <span class="weather"><svg viewBox="0 0 26 26"><path fill="#9ec5f4" d="M3 17a4 4 0 0 1 2-7 7 7 0 0 1 13-1 5 5 0 0 1 4 8 3 3 0 0 1-2 1H5a3 3 0 0 1-2-1z"/><path fill="#1e63e0" d="M15 18h6v5a3 3 0 0 1-6 0z"/><circle cx="18" cy="6" r="6" fill="#c62a1e"/><text x="18" y="9.500" font-size="9.500" text-anchor="middle" font-family="Liberation Sans" font-weight="700" fill="#fff">7</text></svg></span>
    <span class="temp">30°C</span><span class="cond">Light rain</span>
    <svg class="up" viewBox="0 0 12 8"><path fill="none" stroke="#eee" stroke-width="1.200" d="M1 7l5-5.500L11 7"/></svg>
    <svg class="net" viewBox="0 0 16 14"><path fill="none" stroke="#eee" d="M.5 1.500h4v4h-4zM4.500 2.500h11v7h-11V5M8 9.500v3M5 12.500h7M2.500 5.500V9"/></svg>
    <svg class="vol" viewBox="0 0 16 14"><path fill="none" stroke="#eee" d="M1 4.500h2.500L7 1.500v11l-3.500-3H1zM9 4.500c1 1.500 1 3.500 0 5M11 3c1.800 2.500 1.800 5.500 0 8M13 1.500c2.500 3.500 2.500 7.500 0 11"/></svg>
    <span class="lang">ENG</span>
    <span class="clock"><span>14:49</span><span>31-07-2025</span></span>
    <svg class="notif" viewBox="0 0 16 16"><path fill="none" stroke="#eee" d="M.5 1.500h15v11h-5l-2.500 2.500-2.500-2.500h-5z"/></svg>
    <span class="peek"></span>
  </div>
</footer>
</body>
</html>
```
FILE: styles.css
```css
* { box-sizing: border-box; }
html, body { margin: 0; padding: 0; }
body {
  width: 1920px; height: 1080px; overflow: hidden;
  display: flex; flex-direction: column;
  background: #000; color: #eee;
  font: 11.800px/16px Roboto, "Liberation Sans", sans-serif;
}
svg { fill: currentColor; }
.defs { position: absolute; width: 0; height: 0; overflow: hidden; }

/* title bar */
.titlebar {
  position: relative; flex: none; height: 24px;
  display: flex; align-items: center;
  background: #fff; color: #111; border-bottom: 1px solid #3a3a3a;
}
.appicon { width: 15px; height: 15px; margin: 0 5px 0 3px; }
.title-text { font-size: 11.900px; }
.loadbar {
  position: absolute; left: 840px; top: 0; width: 241px; height: 1px;
  background: linear-gradient(90deg, #0078d4 0 48px, #e6e6e6 48px);
}
.winbtns { margin-left: auto; display: flex; gap: 33px; margin-right: 19px; }
.winbtns svg { width: 12px; height: 12px; }

/* menu */
.menubar {
  flex: none; height: 26px; display: flex; align-items: center; padding-left: 2px;
  background: linear-gradient(#d9d9da 0, #cfcfd0 25%, #bcbcbe 60%, #a6a7a9 100%);
  color: #222;
}
.menubar span { padding: 0 8px; }

/* toolbar */
.toolbar {
  flex: none; height: 38px; display: flex; gap: 2px;
  padding: 3px 0 0 6px;
  border-bottom: 2px solid #000;
  box-shadow: inset 0 -1px 0 #5a5a5c;
  background:
    radial-gradient(ellipse 420px 40px at 1390px 50%, #4a4a4d 0, rgba(74,74,77,0) 100%),
    linear-gradient(#2a2a2c, #1f2022);
}
.tgroup {
  height: 30px; display: flex; align-items: center;
  padding: 0 7px 0 0;
  background: #454548;
  border: 1px solid #141414; border-left: 4px solid #bcbcbc;
  border-radius: 2px;
}
.tb { width: 30px; height: 18px; color: #c4c4c6; }
.tb.dim { color: #828285; }

/* workspace */
.workspace {
  flex: none; height: 927px; display: flex;
  padding: 8px 0 0 7px;
  background: #000;
}
.explorer {
  flex: none; width: 218px; height: 912px; margin: 1px 8px 0 0;
  display: flex; flex-direction: column; background: #4b4b4f;
}
.phead {
  flex: none; height: 21px; display: flex; align-items: center; padding: 0 6px 0 4px;
  background: linear-gradient(#4e4f52, #333538 55%, #1d1f21);
  color: #fff;
}
.grip {
  flex: 1; height: 6px; margin: 0 8px;
  background: radial-gradient(circle at 1px 1px, #8c8c8c .7px, transparent .9px) 0 0 / 3px 3px;
}
.tri-sm {
  width: 0; height: 0; margin-right: 8px;
  border: 4px solid transparent; border-top: 5px solid #fff; border-bottom: 0;
}
.pin { width: 8px; height: 12px; flex: none; }
.ctrlrow { flex: none; height: 38px; position: relative; display: flex; padding: 9px 0 0 6px; }
.combo {
  width: 117px; height: 22px; display: flex; border: 1px solid #a8a8aa;
  background: #57575b;
}
.combo-text { padding: 2px 0 0 3px; width: 95px; white-space: nowrap; }
.combo-btn {
  flex: 1; background: #3e4050; border-left: 1px solid #9a9a9c;
  display: flex; align-items: center; justify-content: center;
}
.tri-down-sm {
  width: 0; height: 0;
  border: 4.500px solid transparent; border-top: 7px solid #f2f2f2; border-bottom: 0;
}
.plc { width: 22px; height: 32px; margin: -5px 0 0 62px; }

.tree { flex: 1; overflow: hidden; }
.band-row { height: 20px; display: flex; align-items: flex-start; padding: 1px 0 0 6px; }
.band-row .tri-down { margin: 4px 3px 0 0; }
.band {
  width: 191px; height: 19px; padding-left: 6px; margin-left: 1px;
  color: #222; line-height: 16px;
  background: linear-gradient(#e1e3e4, #a3aaae);
  border: 1px solid #70747a;
  border-left-color: #9a9ca0;
}
.row { height: 20px; display: flex; align-items: center; white-space: nowrap; }
.row.sel { background: #6cb2f0; color: #1a1f2e; }
.chk { flex: none; width: 12px; height: 12px; margin-left: 20px; background: #39393d; }
.gut { flex: none; }
.g1 { width: 6px; } .g2 { width: 25px; } .g3 { width: 44px; } .g4 { width: 63px; }
.tw { flex: none; width: 14px; height: 20px; display: flex; align-items: center; }
.tri-down {
  flex: none; width: 0; height: 0;
  border-left: 5px solid transparent; border-right: 5px solid transparent; border-top: 11px solid #f4f4f4;
}
.tri-right {
  flex: none; width: 0; height: 0;
  border-top: 5px solid transparent; border-bottom: 5px solid transparent; border-left: 10px solid #f4f4f4;
}
.elbow {
  display: block; width: 7px; height: 7px; margin: 0 0 0 4px;
  border-left: 1px solid #e8e8e8; border-bottom: 1px solid #e8e8e8;
}
.ic { flex: none; width: 13px; height: 13px; margin-right: 5px; color: #a8a8aa; }
.row.sel .ic { color: #c8c8c8; }
.row.sel .elbow { border-color: #1a1f2e; }

.side-scroll { flex: none; height: 19px; display: flex; align-items: center; background: #424246; }
.sb-btn { flex: none; width: 17px; height: 19px; display: flex; align-items: center; justify-content: center; }
.sb-btn svg { width: 8px; height: 12px; }
.sb-track { flex: 1; height: 19px; display: flex; align-items: center; border: solid #36363a; border-width: 0 1px; }
.sb-thumb { width: 155px; height: 10px; background: #707072; }
.filter {
  flex: none; height: 22px; display: flex; align-items: center;
  background: linear-gradient(#4c4e50, #26282a 50%, #111214);
  border: 1px solid #000; box-shadow: inset 0 0 0 1px #1a1a1a;
}
.info {
  flex: none; width: 15px; height: 18px; margin-left: 2px; text-align: center;
  background: #bdbdbd; color: #222; font-weight: 700; line-height: 18px;
}
.filter-text { margin-left: 6px; }
.filter-pin {
  margin-left: auto; margin-right: 2px; width: 14px; height: 17px; border: 1px solid #ddd;
  display: flex; align-items: center; justify-content: center; background: #333;
}
.filter-pin svg { width: 11px; height: 13px; }

/* centre */
.center { flex: none; width: 1522px; margin-right: 7px; display: flex; flex-direction: column; }
.doc { flex: none; height: 865px; margin-bottom: 7px; display: flex; flex-direction: column; }
.tabstrip { flex: none; height: 25px; display: flex; }
.tabs { width: 1367px; display: flex; border-top: 4px solid #6cb2f0; background: #55565a; }
.tab {
  flex: none; height: 21px; display: flex; align-items: center; white-space: nowrap;
  color: #a7a7a9; padding: 0 0 3px 3px; overflow: hidden;
}
.tabic { flex: none; width: 16px; height: 16px; margin-right: 4px; color: #c9c9cb; }
.t1 { width: 190px; } .t2 { width: 150px; } .t3 { width: 193px; } .t4 { width: 189px; }
.t5 { width: 134px; } .t6 { width: 188px; } .t7 { width: 189px; }
.tab.active {
  width: 134px; height: 25px; margin-top: -4px; background: #6cb2f0; color: #172036;
  padding: 1px 0 0 4px;
}
.active .tabic { color: #d6d6d6; }
.tabx { width: 9px; height: 9px; margin-left: 8px; }
.tabfill {
  flex: 1; background: #636365; border-bottom: 2px solid #6cb2f0;
  display: flex; justify-content: flex-end; padding: 11px 0 0 0;
}
.tabfill .tri-sm { margin-right: 4px; }

.docbody {
  flex: 1; display: flex; background: #4c4d50;
  border: 1px solid #6cb2f0; border-top: 0;
}
.bigicon { background: #85bff8; border: 1px solid #0c0c0c; }
.bigicon svg { display: block; width: 100%; height: 100%; }
.side-ic { flex: none; width: 42px; height: 42px; margin: 9px 29px 0 8px; }
.panel { flex: 1; display: flex; flex-direction: column; align-items: flex-start; }
.panel-head {
  flex: none; width: 100%; height: 52px; display: flex; align-items: flex-start;
  padding: 6px 0 0 5px; border-bottom: 2px solid #000;
}
.head-ic { flex: none; width: 40px; height: 40px; }
.panel-title { margin: 1px 0 0 7px; font: 400 19.500px/28px Roboto, sans-serif; color: #9b9b9d; white-space: nowrap; }
.tblwrap {
  flex: none; width: 1439px; height: 689px; margin: 5px 0 0 1px;
  display: flex; border: 2px solid #000;
}
.tblmain { flex: none; width: 1419px; display: flex; flex-direction: column; }
.thead, .tr { display: grid; grid-template-columns: 99px 100px 150px 150px 1fr; flex: none; }
.thead { height: 14px; background: #3c3d41; }
.th { text-align: center; line-height: 14px; border-right: 1px solid #a9a9ab; color: #f4f4f4; }
.thend { background: #3c3d41; }
.tr { height: 18.400px; background: #4e4f52; }
.tr:nth-child(odd) { background: #57585c; }
.td { text-align: center; line-height: 16px; border-right: 1px solid #000; overflow: hidden; color: #f2f2f2; }
.td.en { display: flex; align-items: center; justify-content: center; padding-right: 4px; }
.focus { border: 1px solid #000; border-width: 1px 2px 1px 1px; }
.cb { display: block; width: 11px; height: 11px; background: #e3e3e3; box-shadow: 0 0 0 1px #47474a; }
.cb.on { background: #6a9fe0; }
.cb svg { display: block; width: 13px; height: 13px; margin: -3px 0 0 0; }
.inp {
  display: block; height: 100%; text-align: left; padding-left: 3px; margin-left: 1px;
  background: #bcbcbc; color: #8b8b8b; border: 1px solid #9f9fa0; line-height: 16px;
}
.inp.live { background: #e3e4e6; color: #111; }
.tblspace { flex: 1; }
.hscroll { flex: none; height: 16px; display: flex; background: #2f2f31; border-bottom: 1px solid #59595b; }
.scbtn { flex: none; width: 15px; height: 15px; display: flex; align-items: center; justify-content: center; background: #26262a; border: 1px solid #3a3a3e; }
.scbtn svg { width: 11px; height: 11px; }
.sctrack { flex: 1; }
.vscroll { flex: 1; display: flex; flex-direction: column; align-items: center; padding: 15px 0 18px; }
.vtrack { flex: 1; width: 15px; background: #3d3d41; }
.reset {
  flex: none; width: 121px; height: 20px; margin: 5px 0 0 1300px; padding: 0;
  font: 11.800px/16px Roboto, sans-serif; color: #f2f2f2;
  background: linear-gradient(#6a6b76, #44454f);
  border: 1px solid #0b0b0b; box-shadow: inset 0 0 0 1px #77787f;
}
.note {
  flex: none; width: 507px; height: 40px; margin: 15px 0 0 0; padding: 5px 0 0 5px;
  line-height: 14px; color: #f4f4f4; white-space: nowrap;
  border: 1px solid #f0f0f0; border-radius: 3px;
}

/* output */
.output { flex: none; }
.ohead {
  height: 21px; display: flex; align-items: center; padding: 0 5px 0 4px;
  background: linear-gradient(#505154, #343639 55%, #1f2123);
  color: #fff;
}
.ohead .tri-sm { margin-right: 8px; }
.ox { width: 10px; height: 10px; margin-left: 7px; }
.otabs { height: 20px; display: flex; gap: 2px; background: #000; }
.otab { padding: 2px 4px 0; background: #55565b; color: #9a9a9c; height: 19px; margin-top: 1px; }
.otab.on { background: #6cb2f0; color: #172036; height: 20px; margin-top: 0; width: 46px; padding-top: 1px; }

/* toolbox */
.toolbox {
  flex: none; width: 151px; height: 911px; margin-top: 1px;
  display: flex; flex-direction: column; background: #4b4b4f;
}
.tb-head { padding-right: 6px; }
.tb-head .grip { margin: 0 6px; }
.tb-head .tri-sm { margin-right: 7px; }
.searchrow { flex: none; height: 28px; display: flex; align-items: flex-start; padding: 5px 0 0 2px; border-top: 1px solid #6a6a6c; }
.searchbox { width: 79px; height: 19px; padding: 1px 0 0 3px; background: #fff; color: #111; line-height: 16px; }
.searchdrop { width: 20px; height: 19px; margin-right: 4px; background: #3f4150; border: 1px solid #8a8a8c; display: flex; align-items: center; justify-content: center; }
.sbtn { width: 20px; height: 19px; margin-right: 4px; background: #4e4f5a; border: 1px solid #6f6f72; display: flex; align-items: center; justify-content: center; }
.sbtn svg { width: 13px; height: 13px; }
.tblist { flex: none; height: 757px; display: flex; justify-content: flex-end; }
.vscroll2 { width: 16px; margin-right: 1px; display: flex; flex-direction: column; }
.tbline { flex: none; height: 2px; margin: 3px 1px 0; background: #9c9c9e; }

/* bottom */
.appfoot { flex: none; height: 25px; background: #212225; border-top: 1px solid #9d9d9f; }
.taskbar {
  flex: none; height: 40px; display: flex; align-items: stretch;
  background: #1a2026; color: #f0f0f0;
}
.start { flex: none; width: 48px; display: flex; align-items: center; justify-content: center; }
.start svg { width: 16px; height: 16px; }
.search {
  flex: none; width: 288px; display: flex; align-items: center;
  background: #f2f2f2; color: #222; font-size: 14.500px; padding-top: 1px;
}
.search svg { width: 18px; height: 18px; margin: 0 11px 0 11px; }
.tk {
  flex: none; width: 49.400px; display: flex; align-items: center; justify-content: center;
  padding-bottom: 0;
  background-repeat: no-repeat; background-position: center bottom; background-size: 40px 3px;
}
.tk svg { width: 24px; height: 24px; }
.tk svg.tkv { width: 17px; height: 22px; }
.tk.run, .tk.run2 { background-image: linear-gradient(#76b9ed, #76b9ed); }
.tk.act {
  background-color: #3f444a; background-image: linear-gradient(#76b9ed, #76b9ed);
  background-size: 44px 3px; background-position: left bottom;
}
.tray { margin-left: auto; display: flex; align-items: center; font-size: 14px; }
.weather { width: 26px; height: 26px; margin-right: 8px; }
.weather svg { display: block; width: 26px; height: 26px; }
.temp { font-size: 13px; margin-right: 7px; }
.cond { margin-right: 27px; }
.up { width: 12px; height: 8px; margin-right: 10px; }
.net { width: 16px; height: 14px; margin-right: 8px; }
.vol { width: 16px; height: 14px; margin-right: 8px; }
.lang { font-size: 12.500px; margin-right: 12px; }
.clock { flex: none; display: flex; flex-direction: column; align-items: center; font-size: 12.500px; line-height: 18px; margin-right: 18px; width: 60px; white-space: nowrap; }
.notif { width: 16px; height: 16px; margin-right: 19px; }
.peek { width: 1px; height: 40px; background: #3a4046; margin-right: 4px; }
```
